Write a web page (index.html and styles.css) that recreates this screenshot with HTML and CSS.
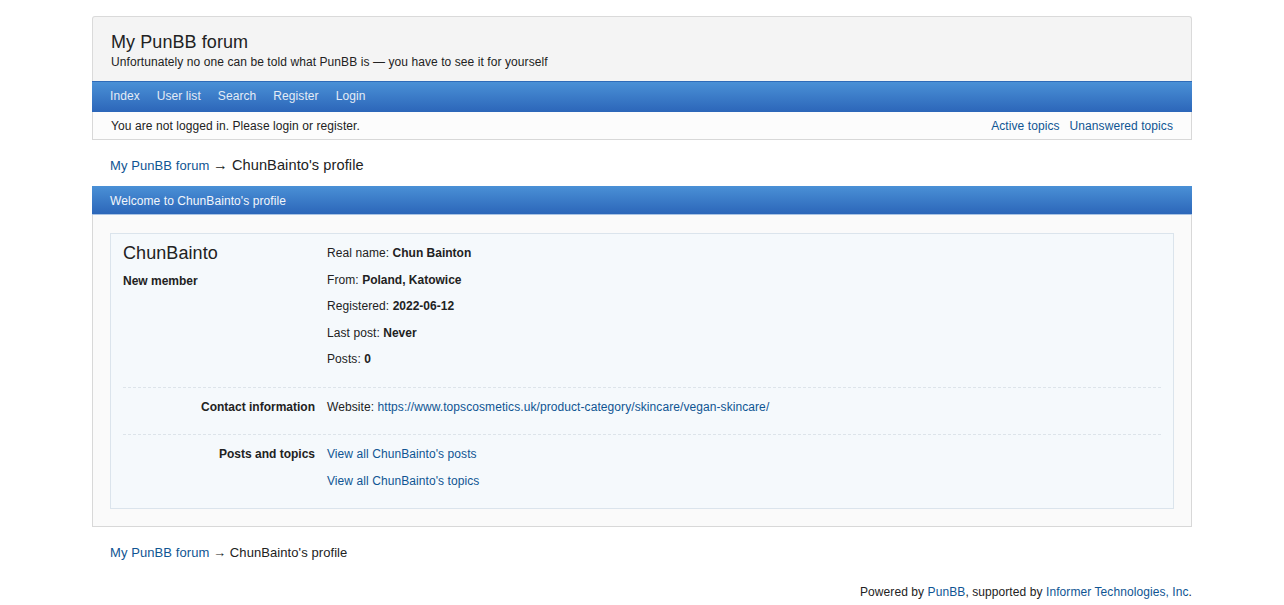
FILE: index.html
```html
<!DOCTYPE html>
<html lang="en">
<head>
    <meta charset="UTF-8">
    <title>ChunBainto's profile — My PunBB forum</title>
    <link rel="stylesheet" href="styles.css">
</head>
<body>
    <div class="wrap">
        <div class="brd-head">
            <div class="board-title">My PunBB forum</div>
            <div class="board-desc">Unfortunately no one can be told what PunBB is — you have to see it for yourself</div>
        </div>
        <ul class="navlinks">
            <li><a href="#">Index</a></li>
            <li><a href="#">User list</a></li>
            <li><a href="#">Search</a></li>
            <li><a href="#">Register</a></li>
            <li><a href="#">Login</a></li>
        </ul>
        <div class="visit">
            <span>You are not logged in. Please login or register.</span>
            <span class="visit-links"><a href="#">Active topics</a><a href="#">Unanswered topics</a></span>
        </div>

        <div class="crumbs crumbs-top"><a href="#">My PunBB forum</a> <span class="cur">→ ChunBainto's profile</span></div>

        <div class="main-head">Welcome to ChunBainto's profile</div>
        <div class="main-content">
            <div class="profile">
                <div class="section">
                    <div class="side">
                        <div class="username">ChunBainto</div>
                        <div class="usertitle">New member</div>
                    </div>
                    <div class="info">
                        <div class="row">Real name: <strong>Chun Bainton</strong></div>
                        <div class="row">From: <strong>Poland, Katowice</strong></div>
                        <div class="row">Registered: <strong>2022-06-12</strong></div>
                        <div class="row">Last post: <strong>Never</strong></div>
                        <div class="row">Posts: <strong>0</strong></div>
                    </div>
                </div>
                <div class="section">
                    <div class="side label">Contact information</div>
                    <div class="info">
                        <div class="row">Website: <a href="#">https://www.topscosmetics.uk/product-category/skincare/vegan-skincare/</a></div>
                    </div>
                </div>
                <div class="section">
                    <div class="side label">Posts and topics</div>
                    <div class="info">
                        <div class="row"><a href="#">View all ChunBainto's posts</a></div>
                        <div class="row"><a href="#">View all ChunBainto's topics</a></div>
                    </div>
                </div>
            </div>
        </div>

        <div class="crumbs crumbs-bottom"><a href="#">My PunBB forum</a> → <span>ChunBainto's profile</span></div>

        <div class="about">Powered by <a href="#">PunBB</a>, supported by <a href="#">Informer Technologies, Inc</a>.</div>
    </div>
</body>
</html>
```

FILE: styles.css
```css
body {
    margin: 0;
    padding: 16px 0 0;
    background: #fff;
    color: #222;
    font-family: "Liberation Sans", Arial, sans-serif;
    font-size: 12px;
    letter-spacing: 0.08px;
}
strong {
    letter-spacing: 0;
}
a {
    color: #0f5593;
    text-decoration: none;
}
.wrap {
    width: 1100px;
    margin: 0 auto;
}
.brd-head {
    background: #f4f4f4;
    border: 1px solid #dadada;
    border-bottom: none;
    border-radius: 3px 3px 0 0;
    padding: 15px 18px 11px;
}
.board-title {
    font-size: 18px;
    line-height: 21px;
    color: #222;
}
.board-desc {
    line-height: 16px;
    margin-top: 1px;
}
.navlinks {
    list-style: none;
    margin: 0;
    padding: 0 18px 2px;
    height: 28px;
    display: flex;
    align-items: center;
    gap: 17px;
    background: linear-gradient(#4a90d6, #2c66b9);
    border-top: 1px solid #2f6bb8;
}
.navlinks a {
    color: #e4ecf6;
}
.visit {
    display: flex;
    justify-content: space-between;
    align-items: center;
    height: 26px;
    padding: 1px 18px 0;
    background: #fcfcfc;
    border: 1px solid #d8d8d8;
    border-top: none;
}
.visit-links a {
    margin-left: 10px;
}
.crumbs {
    padding: 0 18px;
}
.crumbs-top {
    font-size: 13px;
    line-height: 17px;
    padding-top: 17px;
    padding-bottom: 12px;
}
.crumbs-top .cur {
    font-size: 14.6px;
}
.crumbs-bottom {
    font-size: 13px;
    line-height: 16px;
    padding-top: 18px;
    padding-bottom: 23px;
}
.main-head {
    height: 27px;
    line-height: 28px;
    padding: 1px 18px 0;
    color: #f2f6fb;
    background: linear-gradient(#4a90d6, #2c66b9);
    border-bottom: 1px solid #a9c3e3;
}
.main-content {
    background: #fafafa;
    border: 1px solid #d8d8d8;
    border-top: none;
    padding: 18px 17px 17px;
}
.profile {
    background: #f5f9fc;
    border: 1px solid #dbe4ec;
}
.section {
    display: flex;
    gap: 12px;
    margin: 0 12px;
    padding: 6px 0 14px;
}
.section + .section {
    border-top: 1px dashed #dde4ea;
}
.side {
    width: 192px;
    flex-shrink: 0;
}
.label {
    text-align: right;
    font-weight: bold;
    letter-spacing: 0;
    line-height: 16.5px;
    padding-top: 5px;
}
.username {
    font-size: 18px;
    line-height: 22px;
    padding-top: 2px;
}
.usertitle {
    font-weight: bold;
    letter-spacing: 0;
    margin-top: 10px;
}
.row {
    line-height: 16.5px;
    padding: 5px 0;
}
.about {
    text-align: right;
    line-height: 16px;
}
```
